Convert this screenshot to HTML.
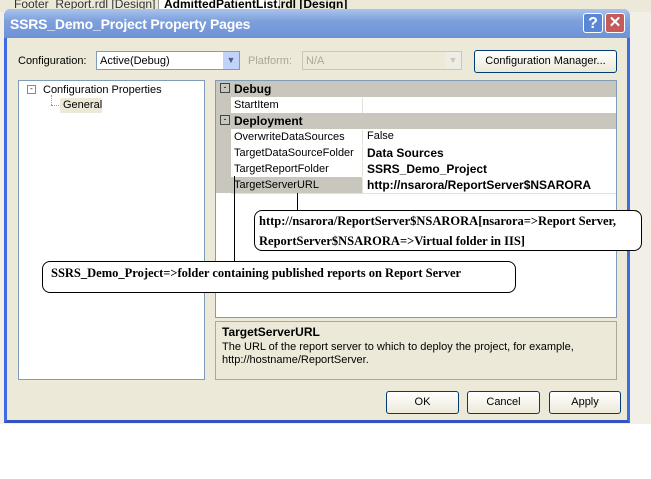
<!DOCTYPE html>
<html><head><style>
body{margin:0;width:651px;height:479px;background:#fff;position:relative;overflow:hidden;font-family:"Liberation Sans",sans-serif;font-size:11px;color:#000}
.a{position:absolute}
.row{position:absolute;left:231px;width:385px;height:16px;border-bottom:1px solid #e4e2d8;background:#fff}
.row .n{position:absolute;left:3px;top:2px}
.row .v{position:absolute;left:131px;top:1px;height:15px;border-left:1px solid #e4e2d8;padding-left:4px;width:250px}
.hd{position:absolute;left:216px;width:400px;height:16px;background:#c9c7bd;font-weight:bold;font-size:12px}
.btn{position:absolute;height:21px;border:1px solid #003c74;border-radius:3px;background:linear-gradient(#fff,#ece9d8);text-align:center;line-height:21px;font-size:11px}
.cb{position:absolute;border:1px solid #7f9db9;background:#fff;height:19px;line-height:19px;padding-left:3px;box-sizing:border-box}
.call{position:absolute;border:1px solid #000;border-radius:8px;background:#fff;font-family:"Liberation Serif",serif;font-weight:bold;font-size:12.5px}
</style></head><body>
<div class="a" style="left:0;top:0;width:651px;height:12px;background:#ece9d8;border-bottom:1px solid #888"></div>
<div class="a" style="left:14px;top:-3px;font-size:12px;color:#333">Footer_Report.rdl [Design]</div>
<div class="a" style="left:158px;top:-3px;width:120px;height:12px;background:#fff;border:1px solid #999"></div>
<div class="a" style="left:164px;top:-3px;font-size:12px;font-weight:bold">AdmittedPatientList.rdl [Design]</div>
<div class="a" style="left:0;top:12px;width:651px;height:412px;background:#f2f0e6"></div>
<div class="a" style="left:4px;top:9px;width:626px;height:414px;background:#ece9d8;border:3px solid #0842c8;border-top:none;border-radius:7px 7px 0 0;box-sizing:border-box;border-left-color:#3f6be0;border-right-color:#3f6be0;border-bottom-color:#3453c0"></div>
<div class="a" style="left:4px;top:9px;width:626px;height:29px;border-radius:7px 7px 0 0;background:linear-gradient(#a9c3ec,#7ea1dc 40%,#6d92d7)"></div>
<div class="a" style="left:10px;top:16px;color:#fff;font-weight:bold;font-size:14px;letter-spacing:-.2px">SSRS_Demo_Project Property Pages</div>
<div class="a" style="left:583px;top:13px;width:20px;height:20px;border:1px solid #fff;border-radius:3px;background:#5b86d8;color:#fff;font-weight:bold;font-size:16px;text-align:center;line-height:20px;box-sizing:border-box">?</div>
<div class="a" style="left:605px;top:13px;width:20px;height:20px;border:1px solid #fff;border-radius:3px;background:#c45a5a;color:#fff;font-weight:bold;font-size:15px;text-align:center;line-height:18px;box-sizing:border-box">✕</div>

<div class="a" style="left:18px;top:55px">Configuration:</div>
<div class="cb" style="left:96px;top:51px;width:144px">Active(Debug)</div>
<div class="a" style="left:223px;top:52px;width:16px;height:17px;background:#c1d3fb;color:#4d6185;text-align:center;font-size:9px;line-height:17px">▼</div>
<div class="a" style="left:248px;top:55px;color:#aca899">Platform:</div>
<div class="cb" style="left:302px;top:51px;width:160px;background:#ece9d8;border-color:#c9c7ba;color:#aca899">N/A</div>
<div class="a" style="left:445px;top:52px;width:16px;height:17px;background:#eeede5;color:#c9c7ba;text-align:center;font-size:9px;line-height:17px">▼</div>
<div class="btn" style="left:474px;top:50px;width:141px">Configuration Manager...</div>

<div class="a" style="left:18px;top:80px;width:187px;height:300px;background:#fff;border:1px solid #7f9db9;box-sizing:border-box"></div>
<div class="a" style="left:27px;top:85px;width:7px;height:7px;border:1px solid #888;font-size:8px;line-height:6px;text-align:center">-</div>
<div class="a" style="left:43px;top:84px">Configuration Properties</div>
<div class="a" style="left:51px;top:95px;height:10px;border-left:1px dotted #999"></div>
<div class="a" style="left:51px;top:105px;width:8px;border-top:1px dotted #999"></div>
<div class="a" style="left:60px;top:98px;width:42px;height:15px;background:#ece9d8"></div>
<div class="a" style="left:63px;top:99px">General</div>

<div class="a" style="left:215px;top:80px;width:402px;height:238px;background:#fff;border:1px solid #7f9db9;box-sizing:border-box"></div>
<div class="a" style="left:216px;top:81px;width:15px;height:112px;background:#c9c7bd"></div>
<div class="hd" style="top:81px"><span style="position:absolute;left:4px;top:2px;width:8px;height:8px;border:1px solid #444;font-size:9px;line-height:7px;text-align:center;font-weight:normal">-</span><span style="position:absolute;left:18px;top:1px">Debug</span></div>
<div class="row" style="top:97px"><span class="n">StartItem</span><span class="v"></span></div>
<div class="hd" style="top:113px"><span style="position:absolute;left:4px;top:2px;width:8px;height:8px;border:1px solid #444;font-size:9px;line-height:7px;text-align:center;font-weight:normal">-</span><span style="position:absolute;left:18px;top:1px">Deployment</span></div>
<div class="row" style="top:129px"><span class="n">OverwriteDataSources</span><span class="v">False</span></div>
<div class="row" style="top:145px"><span class="n">TargetDataSourceFolder</span><span class="v" style="font-weight:bold;font-size:12px">Data Sources</span></div>
<div class="row" style="top:161px"><span class="n">TargetReportFolder</span><span class="v" style="font-weight:bold;font-size:12px">SSRS_Demo_Project</span></div>
<div class="row" style="top:177px;background:linear-gradient(90deg,#c9c7bd 131px,#fff 131px)"><span class="n">TargetServerURL</span><span class="v" style="font-weight:bold;font-size:12px">http://nsarora/ReportServer$NSARORA</span></div>

<div class="a" style="left:215px;top:321px;width:402px;height:59px;border:1px solid #aca899;box-sizing:border-box"></div>
<div class="a" style="left:222px;top:325px;font-weight:bold;font-size:12px">TargetServerURL</div>
<div class="a" style="left:222px;top:341px;line-height:13px">The URL of the report server to which to deploy the project, for example,<br>http://hostname/ReportServer.</div>

<div class="btn" style="left:386px;top:391px;width:71px">OK</div>
<div class="btn" style="left:467px;top:391px;width:71px">Cancel</div>
<div class="btn" style="left:549px;top:391px;width:70px">Apply</div>

<div class="a" style="left:297px;top:193px;height:17px;border-left:1px solid #000"></div>
<div class="a" style="left:234px;top:176px;height:85px;border-left:1px solid #000"></div>
<div class="call" style="left:254px;top:210px;width:388px;height:41px;line-height:20px;padding-left:4px;box-sizing:border-box">http://nsarora/ReportServer$NSARORA[nsarora=&gt;Report Server,<br>ReportServer$NSARORA=&gt;Virtual folder in IIS]</div>
<div class="call" style="left:42px;top:261px;width:474px;height:32px;line-height:22px;padding-left:8px;box-sizing:border-box">SSRS_Demo_Project=&gt;folder containing published reports on Report Server</div>
</body></html>
